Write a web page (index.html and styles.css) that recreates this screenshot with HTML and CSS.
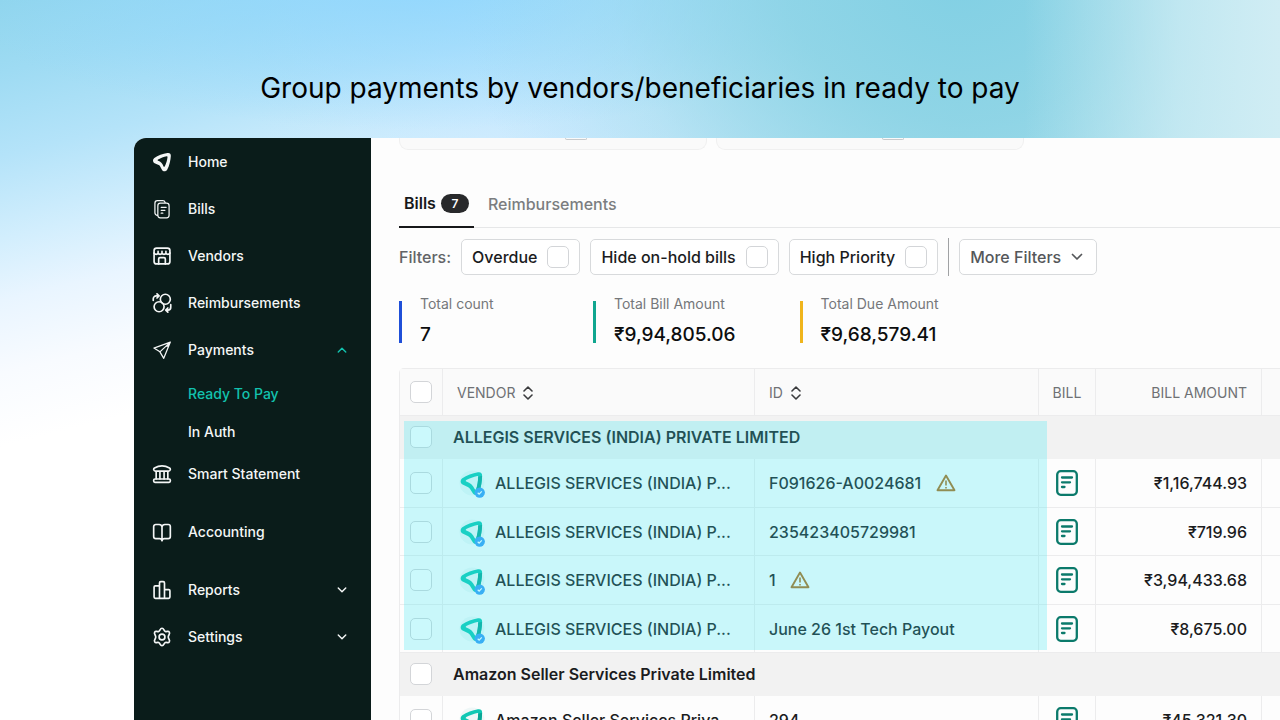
FILE: index.html
```html
<!DOCTYPE html>
<html lang="en">
<head>
  <meta charset="UTF-8" />
  <meta name="viewport" content="width=device-width, initial-scale=1" />
  <title>Ready To Pay</title>
  <link rel="stylesheet" href="styles.css">
</head>
<body>

  <!-- Shared icons -->
  <svg class="sprite" aria-hidden="true">
    <symbol id="logo" viewBox="0 0 24 24">
      <path fill="currentColor" stroke="none" fill-rule="evenodd" d="M18.500 1.300c2.700-.5 4.300 1 4.100 3.500-.3 5-1.600 11.500-4.400 16.500-1.300 2.300-4.900 2.500-6.300 0L9.800 17.400c-.4-.8-.9-1.300-1.800-1.700l-4.900-2.100C.7 12.300.5 9 2.800 7.300 7 4.300 13 2.200 18.500 1.300zM17.800 5.100c-3.800.8-7.300 2.100-10.500 4-.8.5-.7 1.200 0 1.500 3.200 1 5.200 2.900 6.400 6.400.3.9 1.300 1 1.700 0 1.800-3.800 2.800-7 3.200-10.800.1-.8-.1-1.200-.8-1.100z"/>
    </symbol>
    <symbol id="down" viewBox="0 0 12 12">
      <path d="M1.500 3.500 6 8l4.500-4.500" fill="none" stroke="currentColor" stroke-width="1.700" stroke-linecap="round" stroke-linejoin="round"/>
    </symbol>
    <symbol id="sort" viewBox="0 0 10 14">
      <path d="M1 5l4-4 4 4M1 9l4 4 4-4" fill="none" stroke="currentColor" stroke-width="1.600" stroke-linecap="round" stroke-linejoin="round"/>
    </symbol>
    <symbol id="bill" viewBox="0 0 22 26">
      <rect x="1.200" y="1.200" width="19.600" height="23.600" rx="3.500" fill="none" stroke="currentColor" stroke-width="2.300"/>
      <path d="M6 7.500h10M6 12.300h8M6 17h2.500" fill="none" stroke="currentColor" stroke-width="2.300" stroke-linecap="round"/>
    </symbol>
    <symbol id="warn" viewBox="0 0 20 18">
      <path d="M10 1.600 18.500 16.300H1.500z" fill="none" stroke="currentColor" stroke-width="1.900" stroke-linejoin="round"/>
      <path d="M10 6.500v5M10 13v1.500" fill="none" stroke="currentColor" stroke-width="1.600"/>
    </symbol>
    <symbol id="vendor" viewBox="0 0 30 30">
      <circle cx="15" cy="15" r="12.500" fill="#eef7f7"/>
      <g transform="translate(2.500 3)">
        <path fill="#10c8b4" fill-rule="evenodd" d="M18.500 1.300c2.700-.5 4.300 1 4.100 3.500-.1 5-1 11.500-3 17.500-1.300 2.300-4.900 2.500-6.300 0l-2.900-4.500c-.6-.9-1.200-1.500-2.100-1.900l-5.200-2.300C.7 12.300.5 9 2.800 7.300 7 4.300 13 2.200 18.500 1.300zM17.800 4.900c-3.800.8-7.600 2.200-11 4.200-.8.500-.7 1.200 0 1.500 3.900 1.400 6.700 3.700 8.400 7.400.4.900 1.300 1 1.600 0 1.300-3.800 1.800-7.800 1.900-12 0-.8-.2-1.200-.9-1.100z"/>
        <path fill="#0aa594" d="M22.600 4.800c-.1 5-1 11-2.800 16.500l-3.200-2.500c1.300-4.300 2-8.800 2.100-13z"/>
      </g>
      <circle cx="22.700" cy="24.600" r="5.200" fill="#3b9bf5"/>
      <path d="M20.700 24.800l1.400 1.300 2.700-2.700" fill="none" stroke="#fff" stroke-width="1.200"/>
    </symbol>
  </svg>

  <h1 class="headline">Group payments by vendors/beneficiaries in ready to pay</h1>

  <div class="window">
    <nav class="sidebar">
      <a class="nav-item" href="#">
        <svg class="icon" viewBox="0 0 24 24"><use href="#logo"/></svg>
        Home
      </a>
      <a class="nav-item" href="#">
        <svg class="icon thin" viewBox="0 0 24 24"><path d="M7 19.500H6.500a3 3 0 0 1-3-3V5a3 3 0 0 1 3-3H13a3 3 0 0 1 2.800 2M7 8a3 3 0 0 1 3-3h7.500a3 3 0 0 1 3 3v11.500a3 3 0 0 1-3 3H10a3 3 0 0 1-3-3zM11 10h6M11 13.500h4.500M11 17h2"/></svg>
        Bills
      </a>
      <a class="nav-item" href="#">
        <svg class="icon" viewBox="0 0 24 24"><rect x="2.500" y="2.500" width="19" height="19" rx="3"/><path d="M2.500 8.500c1 2 4 2 4.800 0 1 2 3.800 2 4.700 0 1 2 3.800 2 4.700 0 1 2 3.800 2 4.800 0M7.300 8.500v-2M12 8.500v-2M16.700 8.500v-2M8 21.500v-6A1.500 1.500 0 0 1 9.500 14h5a1.500 1.500 0 0 1 1.500 1.500v6"/></svg>
        Vendors
      </a>
      <a class="nav-item" href="#">
        <svg class="icon" viewBox="0 0 24 24"><circle cx="16" cy="7.500" r="6"/><circle cx="8.500" cy="16.500" r="6"/><path d="M1.500 9V7A3.500 3.500 0 0 1 5 3.500h3M6 1l2.500 2.500L6 6M22.500 14v3a3.500 3.500 0 0 1-3.500 3.500h-2M19 23l-2.500-2.500L19 18"/></svg>
        Reimbursements
      </a>
      <button class="nav-item" type="button" aria-expanded="true">
        <svg class="icon thin" viewBox="0 0 24 24"><path d="M22 2.500 2.300 9.700l7.200 4.500L14.100 22zM22 2.500 9.500 14.200M22 2.500l-4 5"/></svg>
        Payments
        <svg class="chevron up"><use href="#down"/></svg>
      </button>
      <div class="subnav">
        <a class="subnav-item active" href="#">Ready To Pay</a>
        <a class="subnav-item" href="#">In Auth</a>
      </div>
      <a class="nav-item" href="#">
        <svg class="icon" viewBox="0 0 24 24"><path d="M4 8.500a2 2 0 0 1-1-3.700C9 1.300 15 1.300 21 4.800a2 2 0 0 1-1 3.700zM5 8.500V18M9.500 8.500V18M14.500 8.500V18M19 8.500V18"/><rect x="2" y="18" width="20" height="4" rx="1.500"/></svg>
        Smart Statement
      </a>
      <a class="nav-item spaced" href="#">
        <svg class="icon" viewBox="0 0 24 24"><path d="M12 6a3.500 3.500 0 0 0-3.500-3H4.500A2.500 2.500 0 0 0 2 5.500v12A2.500 2.500 0 0 0 4.500 20H9a3 3 0 0 1 3 2.500A3 3 0 0 1 15 20h4.500a2.500 2.500 0 0 0 2.500-2.500v-12A2.500 2.500 0 0 0 19.500 3h-4A3.500 3.500 0 0 0 12 6zM12 6v16"/></svg>
        Accounting
      </a>
      <button class="nav-item spaced" type="button">
        <svg class="icon" viewBox="0 0 24 24"><path d="M9 22V3.500A1.500 1.500 0 0 1 10.500 2h3A1.500 1.500 0 0 1 15 3.500V22M9 7H4a1.500 1.500 0 0 0-1.500 1.500v12A1.500 1.500 0 0 0 4 22h16a1.500 1.500 0 0 0 1.500-1.500V13a1.500 1.500 0 0 0-1.500-1.500H15"/></svg>
        Reports
        <svg class="chevron"><use href="#down"/></svg>
      </button>
      <button class="nav-item" type="button">
        <svg class="icon" viewBox="0 0 24 24"><path d="M12 1.500c2.500 0 2 3 4 3.800s3.500-1.300 4.800.9-1.300 3.300-1.300 5.800 2.600 3.600 1.300 5.800-2.800.1-4.800.9-1.500 3.800-4 3.800-2-3-4-3.800-3.500 1.300-4.800-.9 1.300-3.300 1.300-5.800S1.900 8.400 3.200 6.200s2.800-.1 4.800-.9 1.500-3.800 4-3.800z"/><circle cx="12" cy="12" r="3.500"/></svg>
        Settings
        <svg class="chevron"><use href="#down"/></svg>
      </button>
    </nav>

    <main class="content">
      <div class="cards">
        <div class="card"><span class="card-tag"></span></div>
        <div class="card"><span class="card-tag"></span></div>
      </div>

      <div class="tabs">
        <button class="tab selected" type="button">Bills <span class="count">7</span></button>
        <button class="tab" type="button">Reimbursements</button>
      </div>

      <div class="filters">
        <span class="filters-label">Filters:</span>
        <label class="filter">Overdue <input class="check" type="checkbox"></label>
        <label class="filter">Hide on-hold bills <input class="check" type="checkbox"></label>
        <label class="filter">High Priority <input class="check" type="checkbox"></label>
        <span class="divider"></span>
        <button class="filter more" type="button">More Filters <svg class="chevron"><use href="#down"/></svg></button>
      </div>

      <div class="stats">
        <div class="stat blue">
          <div class="stat-label">Total count</div>
          <div class="stat-value">7</div>
        </div>
        <div class="stat green">
          <div class="stat-label">Total Bill Amount</div>
          <div class="stat-value">₹9,94,805.06</div>
        </div>
        <div class="stat yellow">
          <div class="stat-label">Total Due Amount</div>
          <div class="stat-value">₹9,68,579.41</div>
        </div>
      </div>

      <div class="table-wrap">
        <table class="bills">
          <colgroup>
            <col class="col-check"><col class="col-vendor"><col class="col-id"><col class="col-bill"><col class="col-amount"><col>
          </colgroup>
          <thead>
            <tr>
              <th><input class="check" type="checkbox" aria-label="Select all"></th>
              <th>VENDOR <svg class="sort"><use href="#sort"/></svg></th>
              <th>ID <svg class="sort"><use href="#sort"/></svg></th>
              <th class="center">BILL</th>
              <th class="amount">BILL AMOUNT</th>
              <th></th>
            </tr>
          </thead>
          <tbody>
            <tr class="group">
              <td><input class="check" type="checkbox" aria-label="Select group"></td>
              <td colspan="5">ALLEGIS SERVICES (INDIA) PRIVATE LIMITED</td>
            </tr>
            <tr>
              <td><input class="check" type="checkbox" aria-label="Select bill"></td>
              <td><div class="vendor"><svg class="vendor-logo"><use href="#vendor"/></svg>ALLEGIS SERVICES (INDIA) P...</div></td>
              <td>F091626-A0024681 <svg class="warn"><use href="#warn"/></svg></td>
              <td class="center"><svg class="bill-icon"><use href="#bill"/></svg></td>
              <td class="amount">₹1,16,744.93</td>
              <td></td>
            </tr>
            <tr>
              <td><input class="check" type="checkbox" aria-label="Select bill"></td>
              <td><div class="vendor"><svg class="vendor-logo"><use href="#vendor"/></svg>ALLEGIS SERVICES (INDIA) P...</div></td>
              <td>235423405729981</td>
              <td class="center"><svg class="bill-icon"><use href="#bill"/></svg></td>
              <td class="amount">₹719.96</td>
              <td></td>
            </tr>
            <tr>
              <td><input class="check" type="checkbox" aria-label="Select bill"></td>
              <td><div class="vendor"><svg class="vendor-logo"><use href="#vendor"/></svg>ALLEGIS SERVICES (INDIA) P...</div></td>
              <td>1 <svg class="warn"><use href="#warn"/></svg></td>
              <td class="center"><svg class="bill-icon"><use href="#bill"/></svg></td>
              <td class="amount">₹3,94,433.68</td>
              <td></td>
            </tr>
            <tr>
              <td><input class="check" type="checkbox" aria-label="Select bill"></td>
              <td><div class="vendor"><svg class="vendor-logo"><use href="#vendor"/></svg>ALLEGIS SERVICES (INDIA) P...</div></td>
              <td>June 26 1st Tech Payout</td>
              <td class="center"><svg class="bill-icon"><use href="#bill"/></svg></td>
              <td class="amount">₹8,675.00</td>
              <td></td>
            </tr>
            <tr class="group">
              <td><input class="check" type="checkbox" aria-label="Select group"></td>
              <td colspan="5">Amazon Seller Services Private Limited</td>
            </tr>
            <tr>
              <td><input class="check" type="checkbox" aria-label="Select bill"></td>
              <td><div class="vendor"><svg class="vendor-logo"><use href="#vendor"/></svg>Amazon Seller Services Priva...</div></td>
              <td>294</td>
              <td class="center"><svg class="bill-icon"><use href="#bill"/></svg></td>
              <td class="amount">₹45,321.30</td>
              <td></td>
            </tr>
          </tbody>
        </table>
        <!-- tint over the first vendor group -->
        <div class="highlight"></div>
      </div>
    </main>
  </div>

</body>
</html>
```

FILE: styles.css
```css
* {
  box-sizing: border-box;
}

body {
  margin: 0;
  height: 100vh;
  overflow: hidden;
  display: flex;
  flex-direction: column;
  font-family: Inter, "Liberation Sans", sans-serif;
  color: #1b1c1e;
  background:
    linear-gradient(90deg, rgba(210,238,245,0) 80%, rgba(210,238,245,0.7) 92%, #d0edf4 100%),
    radial-gradient(ellipse 500px 400px at 960px -20px, #82d0e4 0%, rgba(136,210,228,0.8) 35%, rgba(150,216,232,0.3) 70%, rgba(150,216,232,0) 100%),
    radial-gradient(ellipse 480px 150px at 420px -20px, #92d7fd 0%, rgba(146,215,253,0) 100%),
    linear-gradient(90deg, rgba(190,228,255,0) 20%, rgba(190,228,255,0.6) 45%, rgba(160,219,234,0.9) 75%),
    linear-gradient(166deg, #90d5ec 0%, #9edbf3 7%, #b4e3f9 15%, #d2eefd 23%, #e9f5ff 29%, #f8fbff 36%, #fff 43%);
}

button {
  font-family: inherit;
  border: 0;
  background: none;
  color: inherit;
  cursor: pointer;
}

a {
  color: inherit;
  text-decoration: none;
}

.sprite {
  position: absolute;
  width: 0;
  height: 0;
}

.headline {
  margin: 0;
  padding: 68px 0 30px;
  font-size: 28px;
  line-height: 40px;
  font-weight: 400;
  text-align: center;
  color: #000;
}

.window {
  flex: 1;
  min-height: 0;
  display: flex;
  margin-left: 134px;
  border-top-left-radius: 12px;
  background: #fdfdfd;
  overflow: hidden;
}

/* Sidebar */
.sidebar {
  flex: none;
  width: 237px;
  background: #0a1c1a;
  color: #f4f6f6;
}

.nav-item {
  display: flex;
  align-items: center;
  width: 100%;
  height: 47px;
  padding: 0 24px 0 18px;
  gap: 16px;
  font-size: 14px;
  font-weight: 500;
}

.nav-item.spaced {
  margin-top: 11px;
}

.icon {
  width: 20px;
  height: 20px;
  fill: none;
  stroke: currentColor;
  stroke-width: 2;
  stroke-linecap: round;
  stroke-linejoin: round;
}

.icon.thin {
  stroke-width: 1.5;
}

.chevron {
  width: 12px;
  height: 12px;
  margin-left: auto;
}

.nav-item .chevron {
  width: 10px;
  height: 10px;
}

.chevron.up {
  color: #12c2ae;
  transform: rotate(180deg);
}

.subnav {
  padding-top: 1px;
}

.subnav-item {
  display: flex;
  align-items: center;
  height: 38px;
  padding-left: 54px;
  font-size: 14px;
  font-weight: 500;
}

.subnav-item.active {
  color: #12c2ae;
}

/* Content */
.content {
  flex: 1;
  min-width: 0;
  padding-left: 28px;
  overflow: hidden;
}

.cards {
  display: flex;
  gap: 9px;
}

.card {
  width: 308px;
  height: 12px;
  border: 1px solid #f0f0f0;
  border-top: 0;
  border-radius: 0 0 9px 9px;
  background: #fafafa;
  display: flex;
  justify-content: center;
  padding-left: 46px;
}

.card-tag {
  width: 22px;
  height: 2px;
  border: 1px solid #c9cacc;
  border-top: 0;
  border-radius: 0 0 4px 4px;
}

.tabs {
  display: flex;
  gap: 4px;
  margin-top: 30px;
  border-bottom: 1px solid #e6e7e8;
}

.tab {
  display: flex;
  align-items: center;
  gap: 5px;
  height: 48px;
  margin-bottom: -1px;
  padding: 0 10px;
  font-size: 16px;
  font-weight: 500;
  color: #7b7d80;
}

.tab.selected {
  padding: 0 5px;
  font-weight: 600;
  color: #17181a;
  border-bottom: 2px solid #17181a;
}

.count {
  width: 28px;
  border-radius: 10px;
  background: #28292b;
  color: #fff;
  font-size: 12px;
  line-height: 19px;
}

.filters {
  display: flex;
  align-items: center;
  gap: 10px;
  margin-top: 10px;
  font-size: 16px;
}

.filters-label {
  font-weight: 500;
  color: #626467;
}

.filter {
  display: flex;
  align-items: center;
  gap: 10px;
  height: 36px;
  padding: 0 10px;
  border: 1px solid #d8dadc;
  border-radius: 5px;
  background: #fff;
  font-size: 16px;
  font-weight: 500;
}

.filter.more {
  padding-right: 13px;
  color: #55575a;
}

.divider {
  width: 1px;
  height: 38px;
  background: #a0a2a4;
}

.check {
  appearance: none;
  display: block;
  flex: none;
  width: 22px;
  height: 22px;
  margin: 0;
  border: 1px solid #d3d5d8;
  border-radius: 5px;
  background: #fff;
}

.stats {
  display: flex;
  gap: 64px;
  margin-top: 25px;
}

.stat {
  min-width: 130px;
  height: 42px;
  padding-left: 18px;
  border-left: 3px solid;
}

.stat.blue { border-color: #1f4fd8; }
.stat.green { border-color: #10a68f; }
.stat.yellow { border-color: #f0b51c; }

.stat-label {
  margin-top: -8px;
  font-size: 14px;
  line-height: 22px;
  color: #75777a;
}

.stat-value {
  margin-top: 6px;
  font-size: 19px;
  line-height: 28px;
  font-weight: 500;
  color: #0c0d0e;
}

/* Table */
.table-wrap {
  position: relative;
  margin-top: 25px;
  width: 1000px;
}

.bills {
  width: 100%;
  table-layout: fixed;
  border-collapse: separate;
  border-spacing: 0;
  border: 1px solid #ececed;
  border-right: 0;
  border-top-left-radius: 5px;
}

.col-check { width: 43px; }
.col-vendor { width: 312px; }
.col-id { width: 284px; }
.col-bill { width: 57px; }
.col-amount { width: 166px; }

.bills th,
.bills td {
  height: 49px;
  padding: 0 14px;
  border-right: 1px solid #ececed;
  border-bottom: 1px solid #ececed;
  font-size: 16px;
  font-weight: 500;
  text-align: left;
  white-space: nowrap;
}

.bills tr:nth-child(odd) td {
  height: 48px;
}

.bills th {
  height: 47px;
  background: #fafafa;
  font-size: 14px;
  font-weight: 400;
  color: #6f7174;
}

.bills th:first-child,
.bills td:first-child {
  padding: 0 10px;
}

.bills tr.group td {
  height: 43px;
  padding-left: 10px;
  background: #f2f2f2;
  border-color: #f2f2f2;
  font-weight: 600;
}

.bills .center {
  padding: 0;
  text-align: center;
}

.bills .amount {
  text-align: right;
}

.sort {
  width: 10px;
  height: 14px;
  margin-left: 4px;
  vertical-align: -2px;
  color: #3a3b3d;
}

.vendor {
  display: flex;
  align-items: center;
  gap: 8px;
}

.vendor-logo {
  width: 30px;
  height: 30px;
}

.warn {
  width: 20px;
  height: 18px;
  margin-left: 10px;
  vertical-align: -3px;
  color: #b06e1c;
}

.bill-icon {
  display: block;
  width: 22px;
  height: 26px;
  margin: 0 auto;
  color: #0b7a6b;
}

.highlight {
  position: absolute;
  top: 53px;
  left: 5px;
  width: 643px;
  height: 229px;
  background: rgba(54, 232, 245, 0.26);
  pointer-events: none;
}
```
